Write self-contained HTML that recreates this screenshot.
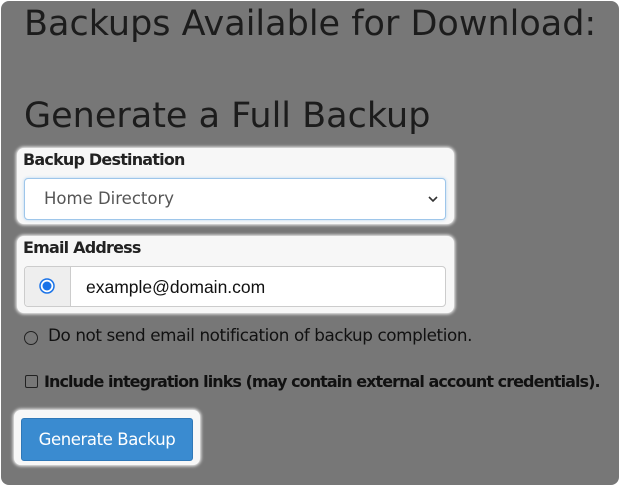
<!DOCTYPE html>
<html><head><style>
html,body{margin:0;padding:0;width:621px;height:488px;background:#fff;overflow:hidden;font-family:"DejaVu Sans","Liberation Sans",sans-serif;}
.page{position:absolute;left:1px;top:1px;width:618px;height:484px;background:#777;border-radius:8px;}
.h{position:absolute;left:24px;color:#1c1c1c;font-size:35px;letter-spacing:0px;white-space:nowrap;}
.box{position:absolute;background:#f7f7f7;border-radius:7px;box-shadow:0 0 3px 1px #fff;}
.lbl{position:absolute;left:23px;font-size:16px;font-weight:bold;color:#222;letter-spacing:-0.8px;}
.sel{position:absolute;left:24px;top:178px;width:420px;height:40px;background:#fff;border:1px solid #9ec6ea;border-radius:4px;box-shadow:0 0 3px #b8d8f3;}
.t{position:absolute;font-size:16px;color:#555;}
.ig{position:absolute;left:24px;top:266px;width:420px;height:39px;background:#fff;border:1px solid #ccc;border-radius:4px;}
.add{position:absolute;left:0;top:0;width:45px;height:39px;background:#eee;border-right:1px solid #ccc;border-radius:4px 0 0 4px;}
.txt{position:absolute;color:#111;font-size:15.5px;letter-spacing:-0.4px;white-space:nowrap;}
</style></head><body>
<div class="page"></div>
<div class="h" style="top:4px">Backups Available for Download:</div>
<div class="h" style="top:96px">Generate a Full Backup</div>

<div class="box" style="left:17px;top:148px;width:437px;height:76px"></div>
<div class="lbl" style="top:150px">Backup Destination</div>
<div class="sel"><span class="t" style="left:19px;top:10px;color:#555;font-size:16.5px">Home Directory</span>
<svg style="position:absolute;right:6px;top:15px" width="12" height="10"><path d="M2 3 L6 7 L10 3" stroke="#333" stroke-width="1.6" fill="none"/></svg></div>

<div class="box" style="left:17px;top:236px;width:437px;height:77px"></div>
<div class="lbl" style="top:238px">Email Address</div>
<div class="ig"><div class="add"><svg style="position:absolute;left:14px;top:11px" width="16" height="16"><circle cx="8" cy="8" r="7" fill="#fff" stroke="#1a73e8" stroke-width="1.5"/><circle cx="8" cy="8" r="4.5" fill="#1a73e8"/></svg></div>
<span class="txt" style="left:61px;top:10px;font-family:'Liberation Sans',sans-serif;font-size:17.5px;letter-spacing:0">example@domain.com</span></div>

<svg style="position:absolute;left:23px;top:330px" width="16" height="16"><circle cx="8" cy="8" r="6.5" fill="none" stroke="#222" stroke-width="1"/></svg>
<div class="txt" style="left:48px;top:325px;font-size:16.8px">Do not send email notification of backup completion.</div>

<div style="position:absolute;left:25px;top:375px;width:11px;height:11px;border:1px solid #222;border-radius:2px"></div>
<div class="txt" style="left:44px;top:372px;font-size:16px;font-weight:bold;letter-spacing:-0.95px">Include integration links (may contain external account credentials).</div>

<div class="box" style="left:14px;top:410px;width:186px;height:55px"></div>
<div style="position:absolute;left:21px;top:418px;width:170px;height:41px;background:#3a8bd0;border:1px solid #2f78b8;border-radius:3px;color:#fff;font-size:16.5px;line-height:41px;text-align:center;letter-spacing:-0.4px">Generate Backup</div>
</body></html>
